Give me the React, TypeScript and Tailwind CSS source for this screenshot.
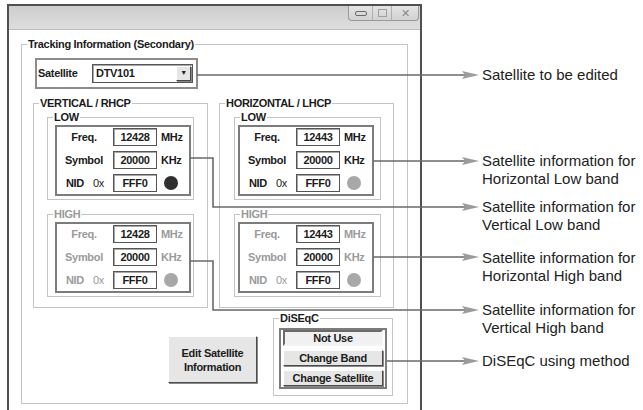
interface BandProps {
  title: string;
  freq: string;
  dim?: boolean;
  dot: string;
  inner: string;
  outer: string;
}

interface NoteProps {
  top: string;
  lines: string[];
}

function Field({ value }: { value: string }) {
  return (
    <div className="flex h-[18px] w-[44px] items-center justify-center border border-[#555] bg-white text-[11px] font-bold text-[#1b1b1b] shadow-[inset_1px_1px_0_#a8a8a8]">
      {value}
    </div>
  );
}

function Band({ title, freq, dim, dot, inner, outer }: BandProps) {
  const label = dim ? "text-[#9a9a9a]" : "text-[#1b1b1b]";
  return (
    <fieldset className={`${outer} h-[89px] w-[147px] border border-[#c4c4c4]`}>
      <legend className={`ml-[5px] px-[1px] text-[11px] font-bold leading-[12px] ${label}`}>{title}</legend>
      <div className={`${inner} mt-[2px] flex h-[71px] w-[136px] flex-col gap-[5px] border-2 border-[#7c7c7c] pt-[1px]`}>
        <div className="flex items-center">
          <span className={`w-[54px] text-center text-[11px] font-bold ${label}`}>Freq.</span>
          <div className="ml-[2px]">
            <Field value={freq} />
          </div>
          <span className={`ml-[4px] text-[11px] font-bold ${label}`}>MHz</span>
        </div>
        <div className="flex items-center">
          <span className={`w-[54px] text-center text-[11px] font-bold ${label}`}>Symbol</span>
          <div className="ml-[2px]">
            <Field value="20000" />
          </div>
          <span className={`ml-[4px] text-[11px] font-bold ${label}`}>KHz</span>
        </div>
        <div className="flex items-center">
          <span className={`flex w-[54px] justify-center gap-[9px] pl-[2px] text-[11px] font-bold ${label}`}>
            <span>NID</span>
            <span className="font-normal">0x</span>
          </span>
          <div className="ml-[2px]">
            <Field value="FFF0" />
          </div>
          <span className={`ml-[7px] h-[14px] w-[14px] rounded-full ${dot}`} />
        </div>
      </div>
    </fieldset>
  );
}

function Note({ top, lines }: NoteProps) {
  return (
    <div className={`absolute left-[482px] ${top} text-[15px] leading-[18px] tracking-normal text-[#222]`}>
      {lines.map((l) => (
        <div key={l}>{l}</div>
      ))}
    </div>
  );
}

const raised =
  "border border-t-white border-l-white border-r-[#4a4a4a] border-b-[#4a4a4a] bg-[#e6e6e6] shadow-[1px_1px_0_#8a8a8a]";

export default function App() {
  const arrows = [75, 161, 207, 257, 310, 361];
  return (
    <div className="relative h-[410px] w-[643px] overflow-hidden bg-white font-['Liberation_Sans',sans-serif] tracking-[-0.3px]">
      {/* window */}
      <div className="ml-[7px] mt-[4px] h-[406px] w-[415px] border-x-2 border-t-2 border-[#505050]">
        <div className="flex h-[24px] justify-end border-b border-[#bdbdbd] bg-gradient-to-b from-[#cdcdcd] to-[#dedede] pr-[1px]">
          <div className="flex h-[15px] rounded-b-[4px] border border-t-0 border-[#9a9a9a] bg-gradient-to-b from-[#e4e4e4] to-[#d2d2d2]">
            <div className="flex w-[24px] items-center justify-center border-r border-[#b0b0b0]">
              <span className="h-[5px] w-[12px] rounded-[2px] border border-[#6a6a6a]" />
            </div>
            <div className="flex w-[19px] items-center justify-center border-r border-[#b0b0b0]">
              <span className="h-[8px] w-[9px] border border-[#a0a0a0]" />
            </div>
            <div className="flex w-[26px] items-center justify-center text-[11px] leading-none text-[#888]">✕</div>
          </div>
        </div>

        <fieldset className="ml-[12px] mt-[8px] h-[366px] w-[387px] border border-[#c4c4c4]">
          <legend className="ml-[5px] px-[1px] text-[11px] font-bold leading-[12px] text-[#1b1b1b]">
            Tracking Information (Secondary)
          </legend>

          <div className="ml-[13px] mt-[8px] flex h-[31px] w-[163px] items-center border-2 border-[#8c8c8c]">
            <span className="w-[55px] pl-[1px] text-[11px] font-bold text-[#1b1b1b]">Satellite</span>
            <div className="flex h-[19px] w-[101px] items-center border border-[#555] bg-white shadow-[inset_1px_1px_0_#a8a8a8]">
              <span className="flex-1 pl-[3px] text-[11px] font-bold text-[#1b1b1b]">DTV101</span>
              <span className={`mr-[1px] flex h-[15px] w-[15px] items-center justify-center text-[7px] text-[#222] ${raised}`}>
                ▼
              </span>
            </div>
          </div>

          <div className="mt-[8px] flex">
            <fieldset className="ml-[11px] h-[211px] w-[175px] border border-[#c4c4c4]">
              <legend className="ml-[5px] px-[1px] text-[11px] font-bold leading-[12px] text-[#1b1b1b]">
                VERTICAL / RHCP
              </legend>
              <Band title="LOW" freq="12428" dot="bg-[#2f2f2f]" outer="ml-[13px] mt-[2px]" inner="ml-[7px]" />
              <Band title="HIGH" freq="12428" dim dot="bg-[#a8a8a8]" outer="ml-[13px] mt-[8px]" inner="ml-[7px]" />
            </fieldset>
            <fieldset className="ml-[11px] h-[211px] w-[175px] border border-[#c4c4c4]">
              <legend className="ml-[5px] px-[1px] text-[11px] font-bold leading-[12px] text-[#1b1b1b]">
                HORIZONTAL / LHCP
              </legend>
              <Band title="LOW" freq="12443" dot="bg-[#a8a8a8]" outer="ml-[14px] mt-[2px]" inner="ml-[3px]" />
              <Band title="HIGH" freq="12443" dim dot="bg-[#a8a8a8]" outer="ml-[14px] mt-[8px]" inner="ml-[3px]" />
            </fieldset>
          </div>

          <div className="mt-[4px] flex items-start">
            <button
              className={`ml-[146px] mt-[24px] flex h-[47px] w-[89px] flex-col items-center justify-center text-[11px] font-bold leading-[14px] text-[#1b1b1b] ${raised}`}
            >
              <span>Edit Satellite</span>
              <span>Information</span>
            </button>
            <fieldset className="ml-[16px] h-[84px] w-[120px] border border-[#c4c4c4]">
              <legend className="ml-[5px] px-[1px] text-[11px] font-bold leading-[12px] text-[#1b1b1b]">DiSEqC</legend>
              <div className="ml-[5px] mt-[4px] flex h-[61px] w-[108px] flex-col gap-[4px] border-2 border-[#7c7c7c] px-[2px]">
                <div className="flex h-[16px] items-center justify-center border-2 border-t-[#6a6a6a] border-l-[#6a6a6a] border-r-[#f4f4f4] border-b-[#f4f4f4] bg-[#f1f1f1] text-[11px] font-bold text-[#1b1b1b]">
                  Not Use
                </div>
                <div className={`flex h-[16px] items-center justify-center text-[11px] font-bold text-[#1b1b1b] ${raised}`}>
                  Change Band
                </div>
                <div className={`flex h-[16px] items-center justify-center text-[11px] font-bold text-[#1b1b1b] ${raised}`}>
                  Change Satellite
                </div>
              </div>
            </fieldset>
          </div>
        </fieldset>
      </div>

      {/* callout lines */}
      <svg className="pointer-events-none absolute left-0 top-0" width="643" height="410">
        <g stroke="#6a6a6a" strokeWidth="1.6" fill="none">
          <polyline points="197,75 466,75" />
          <polyline points="373,161 466,161" />
          <polyline points="190,158 213,158 213,207 466,207" />
          <polyline points="373,257 466,257" />
          <polyline points="190,261 213,261 213,310 466,310" />
          <polyline points="387,361 466,361" />
        </g>
        <g fill="#9c9c9c">
          {arrows.map((y) => (
            <polygon key={y} points={`462,${y - 4} 479,${y} 462,${y + 4} 465,${y}`} />
          ))}
        </g>
      </svg>

      <Note top="top-[66px]" lines={["Satellite to be edited"]} />
      <Note top="top-[152px]" lines={["Satellite information for", "Horizontal Low band"]} />
      <Note top="top-[198px]" lines={["Satellite information for", "Vertical Low band"]} />
      <Note top="top-[249px]" lines={["Satellite information for", "Horizontal High band"]} />
      <Note top="top-[301px]" lines={["Satellite information for", "Vertical High band"]} />
      <Note top="top-[352px]" lines={["DiSEqC using method"]} />
    </div>
  );
}
